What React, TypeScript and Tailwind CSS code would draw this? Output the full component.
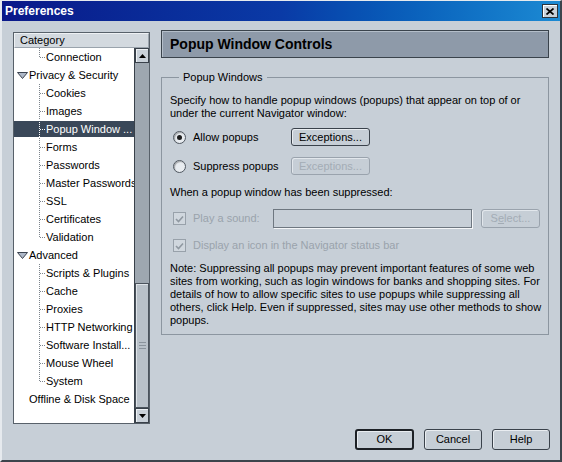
import { ReactNode } from 'react';

type TreeRow = {
  label: string;
  level: 0 | 1;
  open?: boolean;
  last?: boolean;
  selected?: boolean;
};

const rows: TreeRow[] = [
  { label: 'Connection', level: 1, last: true },
  { label: 'Privacy & Security', level: 0, open: true },
  { label: 'Cookies', level: 1 },
  { label: 'Images', level: 1 },
  { label: 'Popup Window ...', level: 1, selected: true },
  { label: 'Forms', level: 1 },
  { label: 'Passwords', level: 1 },
  { label: 'Master Passwords', level: 1 },
  { label: 'SSL', level: 1 },
  { label: 'Certificates', level: 1 },
  { label: 'Validation', level: 1, last: true },
  { label: 'Advanced', level: 0, open: true },
  { label: 'Scripts & Plugins', level: 1 },
  { label: 'Cache', level: 1 },
  { label: 'Proxies', level: 1 },
  { label: 'HTTP Networking', level: 1 },
  { label: 'Software Install...', level: 1 },
  { label: 'Mouse Wheel', level: 1 },
  { label: 'System', level: 1, last: true },
  { label: 'Offline & Disk Space', level: 0 },
];

const Connector = ({ last, light }: { last?: boolean; light?: boolean }) => (
  <svg width='6' height='18' className='shrink-0' shapeRendering='crispEdges'>
    <line x1='0.5' y1='0' x2='0.5' y2={last ? 9 : 18} stroke={light ? '#ffffff' : '#7c848c'} strokeDasharray='1 1' />
    <line x1='1' y1='9.5' x2='6' y2='9.5' stroke={light ? '#ffffff' : '#7c848c'} strokeDasharray='1 1' />
  </svg>
);

const Twisty = () => (
  <svg width='11' height='7' className='shrink-0'>
    <polygon points='0.5,0.5 10.5,0.5 5.5,6.5' fill='#aeb8c8' stroke='#3c4450' strokeWidth='1' />
  </svg>
);

const Tree = () => (
  <div className='w-[137px] h-[392px] mt-[2px] border border-[#58616a] flex flex-col bg-white'>
    <div className='h-[15px] bg-[#d3d9df] border border-[#9aa3ac] border-t-[#eef1f4] border-l-[#eef1f4] flex items-center pl-[5px] text-[11px] leading-none text-black'>
      Category
    </div>
    <div className='flex flex-1'>
      <div className='w-[120px] flex flex-col'>
        {rows.map((r) => (
          <div key={r.label} className='h-[18px] flex items-center'>
            <div
              className={
                r.selected
                  ? 'w-full h-[16px] flex items-center bg-[#3a4859] text-white'
                  : 'w-full h-[16px] flex items-center text-black'
              }
            >
              {r.level === 1 ? (
                <>
                  <span className='w-[25px] shrink-0' />
                  <Connector last={r.last} light={r.selected} />
                  <span className='ml-[1px] whitespace-nowrap'>{r.label}</span>
                </>
              ) : (
                <>
                  <span className='w-[3px] shrink-0' />
                  {r.open ? <Twisty /> : <span className='w-[11px] shrink-0' />}
                  <span className='ml-[1px] whitespace-nowrap'>{r.label}</span>
                </>
              )}
            </div>
          </div>
        ))}
      </div>
      <Scrollbar />
    </div>
  </div>
);

const ArrowBtn = ({ up }: { up?: boolean }) => (
  <div className='h-[15px] bg-[#c9d1d9] border border-[#39414a] shadow-[inset_1px_1px_0_#eef2f5] flex items-center justify-center'>
    <svg width='7' height='4'>
      <polygon points={up ? '3.5,0 7,4 0,4' : '0,0 7,0 3.5,4'} fill='#000' />
    </svg>
  </div>
);

const Scrollbar = () => (
  <div className='w-[15px] flex flex-col bg-[#9ea7b0] border-l border-[#39414a]'>
    <ArrowBtn up />
    <div className='flex-1' />
    <div className='h-[125px] bg-[#b9c1c9] border border-[#4b535c] shadow-[inset_1px_1px_0_#dfe4e9] flex flex-col items-center justify-center gap-[2px]'>
      <span className='w-[7px] h-[1px] bg-[#8a939c]' />
      <span className='w-[7px] h-[1px] bg-[#8a939c]' />
      <span className='w-[7px] h-[1px] bg-[#8a939c]' />
    </div>
    <ArrowBtn />
  </div>
);

const Radio = ({ checked }: { checked?: boolean }) => (
  <span className='w-[13px] h-[13px] rounded-full border border-[#4f5760] bg-[#e8ecf0] shadow-[inset_1px_1px_1px_rgba(0,0,0,0.3)] flex items-center justify-center shrink-0'>
    {checked && <span className='w-[5px] h-[5px] rounded-full bg-[#1c1c1c]' />}
  </span>
);

const Check = () => (
  <span className='w-[13px] h-[13px] border border-[#98a1aa] bg-[#d0d7de] flex items-center justify-center shrink-0'>
    <svg width='9' height='8'>
      <polyline points='1,4 3.5,6.5 8,1.5' fill='none' stroke='#8f98a1' strokeWidth='1.6' />
    </svg>
  </span>
);

const Btn = ({ children, className, disabled, strong }: { children: ReactNode; className: string; disabled?: boolean; strong?: boolean }) => {
  let look = 'border border-[#3a424b] text-black shadow-[inset_1px_1px_0_#e9edf1]';
  if (disabled) look = 'border border-[#9aa3ad] text-[#a3acb5] shadow-[inset_1px_1px_0_#e2e7ec]';
  if (strong) look = 'border-2 border-[#1d2126] text-black shadow-[inset_1px_1px_0_#e9edf1]';
  return (
    <div className={`${className} ${look} rounded-[3px] bg-[#c6ced6] flex items-center justify-center text-[11px] leading-none`}>
      {children}
    </div>
  );
};

export default function App() {
  return (
    <div className="w-[562px] h-[462px] bg-[#c7cfd7] border-t border-l-2 border-r-2 border-b-2 border-t-[#e6eaee] border-l-[#e6eaee] border-r-[#3c444c] border-b-[#3c444c] flex flex-col font-['Liberation_Sans',Arial,sans-serif] text-[11px] overflow-hidden">
      <div className='h-[20px] shrink-0 bg-gradient-to-r from-[#0a1889] via-[#0a3aa6] to-[#1c8ad3] flex items-center justify-between pl-[3px] pr-[2px]'>
        <span className='text-white font-bold text-[12px] leading-none'>Preferences</span>
        <div className='w-[16px] h-[14px] bg-[#c9d1d9] border border-[#2c333a] shadow-[inset_1px_1px_0_#ffffff] flex items-center justify-center'>
          <svg width='8' height='7'>
            <path d='M0.5 0.5 L7.5 6.5 M7.5 0.5 L0.5 6.5' stroke='#000' strokeWidth='1.7' />
          </svg>
        </div>
      </div>

      <div className='flex items-start pt-[9px] pl-[11px] gap-[11px]'>
        <Tree />

        <div className='w-[388px] flex flex-col'>
          <div className='h-[28px] bg-[#8e9aa9] border border-[#3a434c] shadow-[inset_1px_1px_0_#b4bec9] flex items-center pl-[8px] text-[14px] font-bold text-black'>
            Popup Window Controls
          </div>

          <fieldset className='mt-[13px] border border-[#8c96a0] pl-[8px] pb-[7px] text-black'>
            <legend className='ml-[9px] px-[4px] leading-[13px]'>Popup Windows</legend>
            <p className='mt-[10px] leading-[13px] whitespace-nowrap'>
              Specify how to handle popup windows (popups) that appear on top of or
              <br />
              under the current Navigator window:
            </p>

            <div className='mt-[8px] h-[18px] flex items-center'>
              <span className='ml-[3px]'>
                <Radio checked />
              </span>
              <span className='ml-[7px] w-[98px]'>Allow popups</span>
              <Btn className='w-[79px] h-[18px]'>Exceptions...</Btn>
            </div>

            <div className='mt-[11px] h-[18px] flex items-center'>
              <span className='ml-[3px]'>
                <Radio />
              </span>
              <span className='ml-[7px] w-[98px]'>Suppress popups</span>
              <Btn disabled className='w-[79px] h-[18px]'>Exceptions...</Btn>
            </div>

            <p className='mt-[11px] leading-[13px]'>When a popup window has been suppressed:</p>

            <div className='mt-[10px] h-[19px] flex items-center'>
              <span className='ml-[3px]'>
                <Check />
              </span>
              <span className='ml-[7px] w-[80px] text-[#9aa3ac]'>Play a sound:</span>
              <div className='w-[199px] h-[19px] border border-[#6e7780] shadow-[1px_1px_0_#f4f6f8]' />
              <Btn disabled className='ml-[9px] w-[59px] h-[19px]'>
                <span>
                  S<span className='underline'>e</span>lect...
                </span>
              </Btn>
            </div>

            <div className='mt-[11px] h-[13px] flex items-center'>
              <span className='ml-[3px]'>
                <Check />
              </span>
              <span className='ml-[7px] text-[#9aa3ac]'>Display an icon in the Navigator status bar</span>
            </div>

            <p className='mt-[10px] leading-[13px] whitespace-nowrap'>
              Note: Suppressing all popups may prevent important features of some web
              <br />
              sites from working, such as login windows for banks and shopping sites. For
              <br />
              details of how to allow specific sites to use popups while suppressing all
              <br />
              others, click Help. Even if suppressed, sites may use other methods to show
              <br />
              popups.
            </p>
          </fieldset>
        </div>
      </div>

      <div className='mt-[5px] flex justify-end gap-[10px] pr-[10px]'>
        <Btn strong className='w-[59px] h-[21px]'>OK</Btn>
        <Btn className='w-[58px] h-[21px]'>Cancel</Btn>
        <Btn className='w-[58px] h-[21px]'>Help</Btn>
      </div>
    </div>
  );
}
